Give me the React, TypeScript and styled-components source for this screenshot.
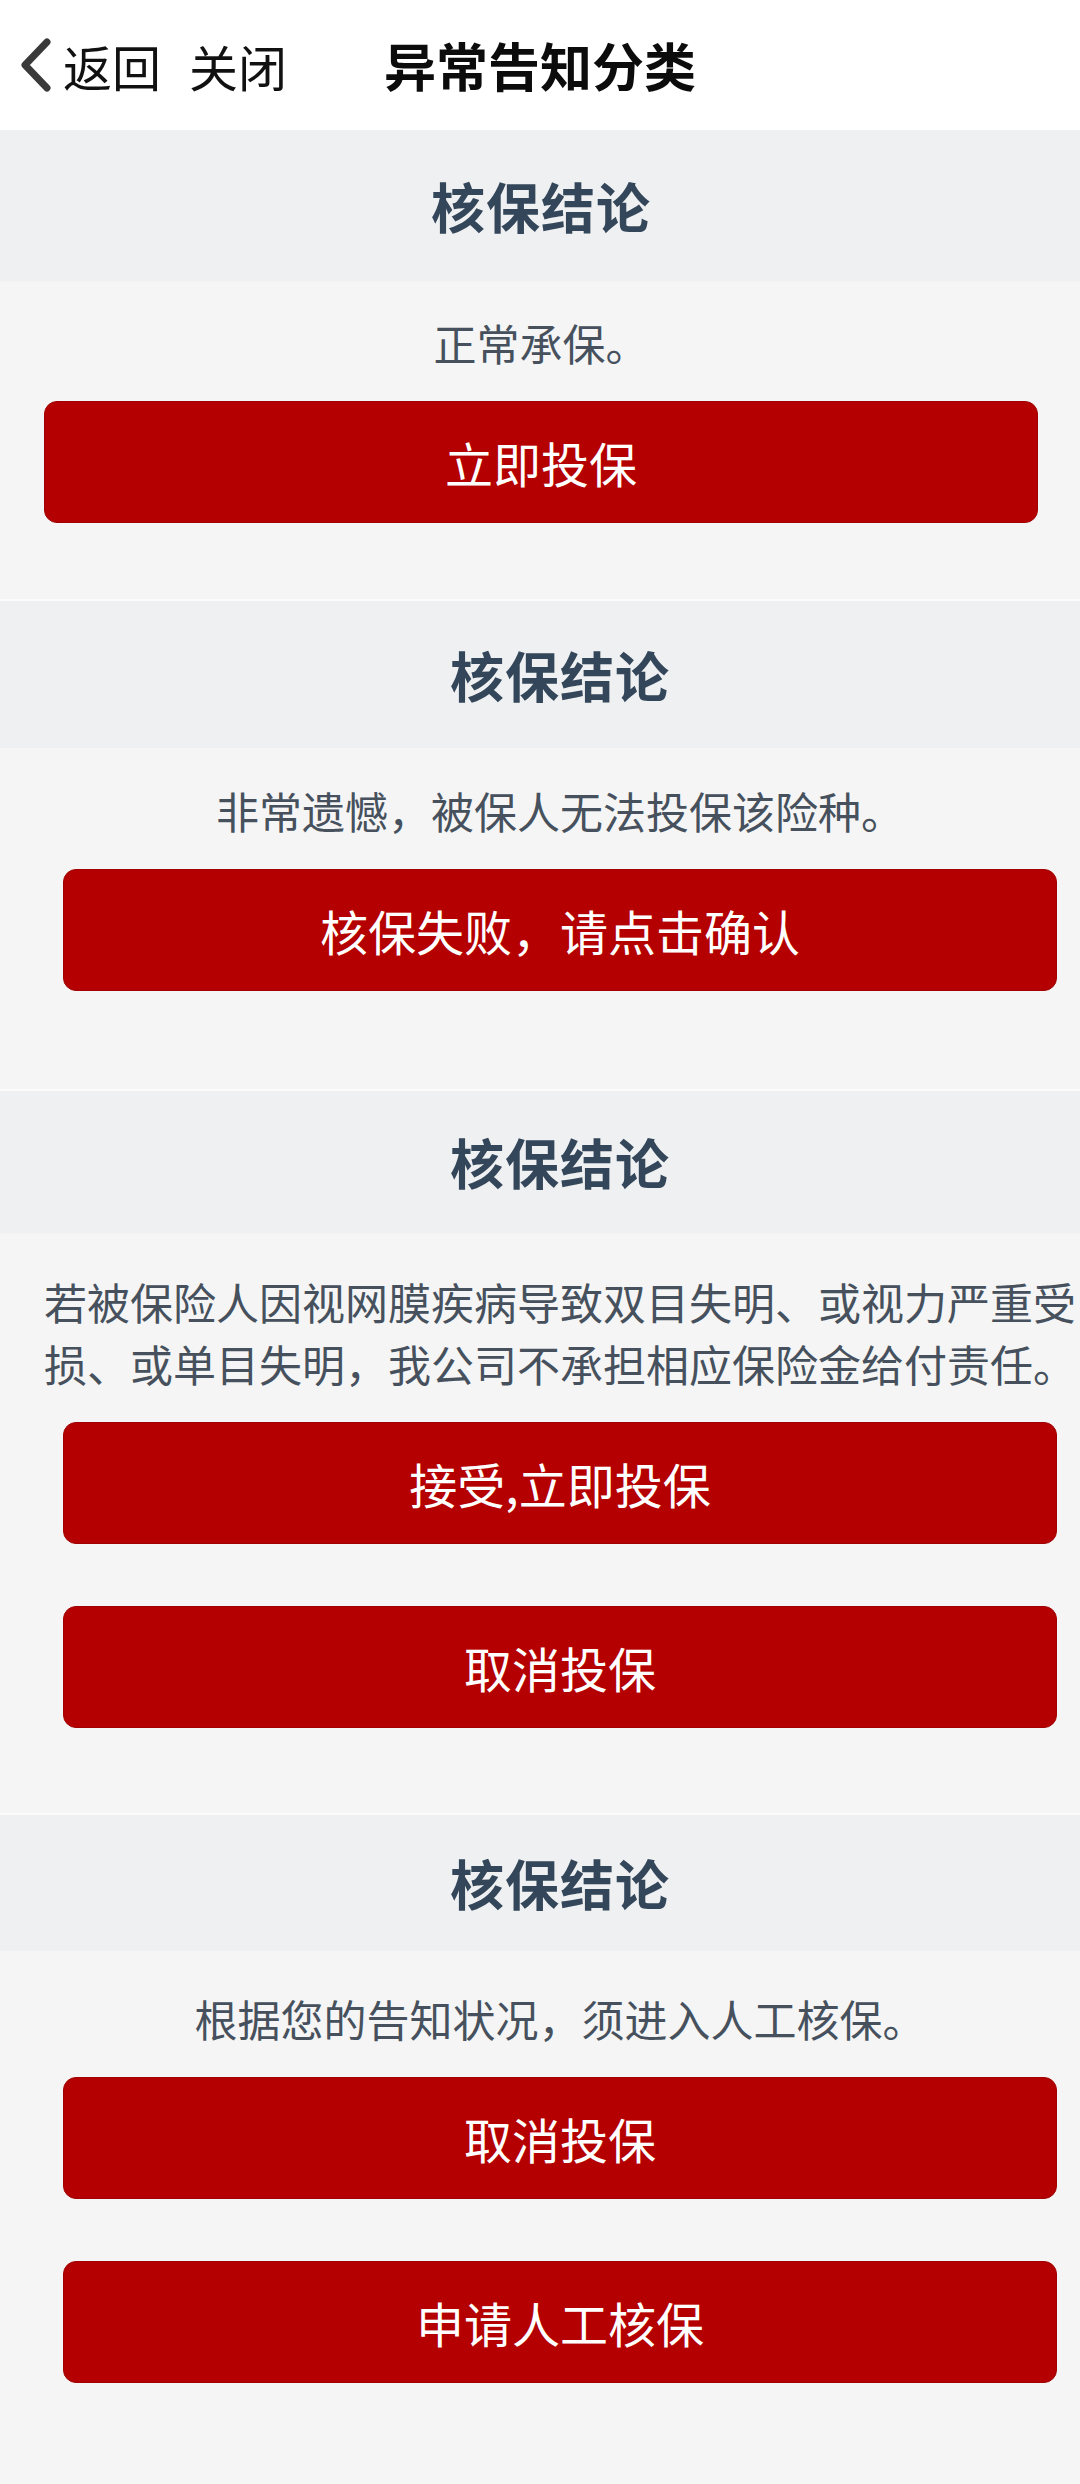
import React from "react";
import styled, { createGlobalStyle } from "styled-components";

const GlobalStyle = createGlobalStyle`
  html, body {
    margin: 0;
    padding: 0;
    background: #f5f5f5;
  }
  body {
    font-family: "Noto Sans CJK SC", "Noto Sans", sans-serif;
    -webkit-font-smoothing: antialiased;
  }
  * { box-sizing: border-box; }
`;

const Page = styled.div`
  width: 1080px;
  min-height: 2484px;
  background: #f5f5f5;
  display: flex;
  flex-direction: column;
`;

const NavBar = styled.header`
  height: 130px;
  background: #ffffff;
  display: grid;
  grid-template-columns: 1fr auto 1fr;
  align-items: center;
`;

const NavLeft = styled.div`
  display: flex;
  align-items: center;
  padding-left: 18px;
`;

const BackIcon = styled.svg`
  width: 34px;
  height: 56px;
  margin-right: 11px;
  flex: none;
`;

const NavLink = styled.span<{ $gap?: number }>`
  font-size: 49px;
  line-height: 1;
  color: #111111;
  margin-left: ${(p) => p.$gap ?? 0}px;
  white-space: nowrap;
`;

const NavTitle = styled.h1`
  margin: 0;
  font-size: 52px;
  font-weight: 700;
  line-height: 1;
  color: #0c0c0c;
  white-space: nowrap;
`;

const Section = styled.section<{ $pl: number; $pr: number }>`
  display: flex;
  flex-direction: column;
  padding: 0 ${(p) => p.$pr}px 0 ${(p) => p.$pl}px;
`;

/* full-width grey band behind the heading */
const HeaderWrap = styled.div<{ $line?: boolean }>`
  background: #eff0f2;
  margin: 0 -100px;
  padding: 0 100px;
  border-top: ${(p) => (p.$line ? "2px solid #fbfbfb" : "none")};
`;

const SectionBand = styled.div<{ $h: number }>`
  height: ${(p) => p.$h}px;
  display: flex;
  align-items: center;
  justify-content: center;
`;

const Heading = styled.h2`
  margin: 0;
  font-size: 54px;
  font-weight: 700;
  line-height: 1;
  color: #34475a;
  letter-spacing: 1px;
`;

const Body = styled.div<{ $pt: number; $pb: number }>`
  display: flex;
  flex-direction: column;
  padding-top: ${(p) => p.$pt}px;
  padding-bottom: ${(p) => p.$pb}px;
`;

const Message = styled.p`
  margin: 0;
  font-size: 43px;
  line-height: 62px;
  color: #46515d;
  text-align: center;
`;

const ButtonStack = styled.div`
  display: flex;
  flex-direction: column;
  gap: 62px;
  margin: 28px 20px 0;
`;

const ActionButton = styled.button`
  height: 122px;
  width: 100%;
  border: 1px solid #a00000;
  border-radius: 13px;
  background: #b40000;
  color: #ffffff;
  font-family: "Noto Sans CJK SC", "Noto Sans", sans-serif;
  font-size: 48px;
  line-height: 1;
  display: flex;
  align-items: center;
  justify-content: center;
  cursor: pointer;
  padding: 0;
`;

const Clip = styled.div`
  overflow: hidden;
  display: flex;
  flex-direction: column;
  flex: 1;
`;

type Conclusion = {
  message: string;
  buttons: string[];
  pl: number;
  pr: number;
  headerH: number;
  pt: number;
  pb: number;
  line: boolean;
};

const conclusions: Conclusion[] = [
  { message: "正常承保。", buttons: ["立即投保"], pl: 24, pr: 22, headerH: 151, pt: 30, pb: 76, line: false },
  {
    message: "非常遗憾，被保人无法投保该险种。",
    buttons: ["核保失败，请点击确认"],
    pl: 43,
    pr: 3,
    headerH: 147,
    pt: 31,
    pb: 98,
    line: true,
  },
  {
    message:
      "若被保险人因视网膜疾病导致双目失明、或视力严重受损、或单目失明，我公司不承担相应保险金给付责任。",
    buttons: ["接受,立即投保", "取消投保"],
    pl: 43,
    pr: 3,
    headerH: 142,
    pt: 37,
    pb: 85,
    line: true,
  },
  {
    message: "根据您的告知状况，须进入人工核保。",
    buttons: ["取消投保", "申请人工核保"],
    pl: 43,
    pr: 3,
    headerH: 136,
    pt: 36,
    pb: 96,
    line: true,
  },
];

export default function App() {
  return (
    <>
      <GlobalStyle />
      <Page>
        <NavBar>
          <NavLeft>
            <BackIcon viewBox="0 0 34 56" aria-hidden="true">
              <polyline
                points="29,5 7,28 29,51"
                fill="none"
                stroke="#3a3a3a"
                strokeWidth="7"
                strokeLinecap="round"
                strokeLinejoin="round"
              />
            </BackIcon>
            <NavLink>返回</NavLink>
            <NavLink $gap={28}>关闭</NavLink>
          </NavLeft>
          <NavTitle>异常告知分类</NavTitle>
          <div />
        </NavBar>
        <Clip>
          {conclusions.map((c, i) => (
            <Section key={i} $pl={c.pl} $pr={c.pr}>
              <HeaderWrap $line={c.line}>
                <SectionBand $h={c.headerH}>
                  <Heading>核保结论</Heading>
                </SectionBand>
              </HeaderWrap>
              <Body $pt={c.pt} $pb={c.pb}>
                <Message>{c.message}</Message>
                <ButtonStack>
                  {c.buttons.map((b) => (
                    <ActionButton key={b} type="button">
                      {b}
                    </ActionButton>
                  ))}
                </ButtonStack>
              </Body>
            </Section>
          ))}
        </Clip>
      </Page>
    </>
  );
}
